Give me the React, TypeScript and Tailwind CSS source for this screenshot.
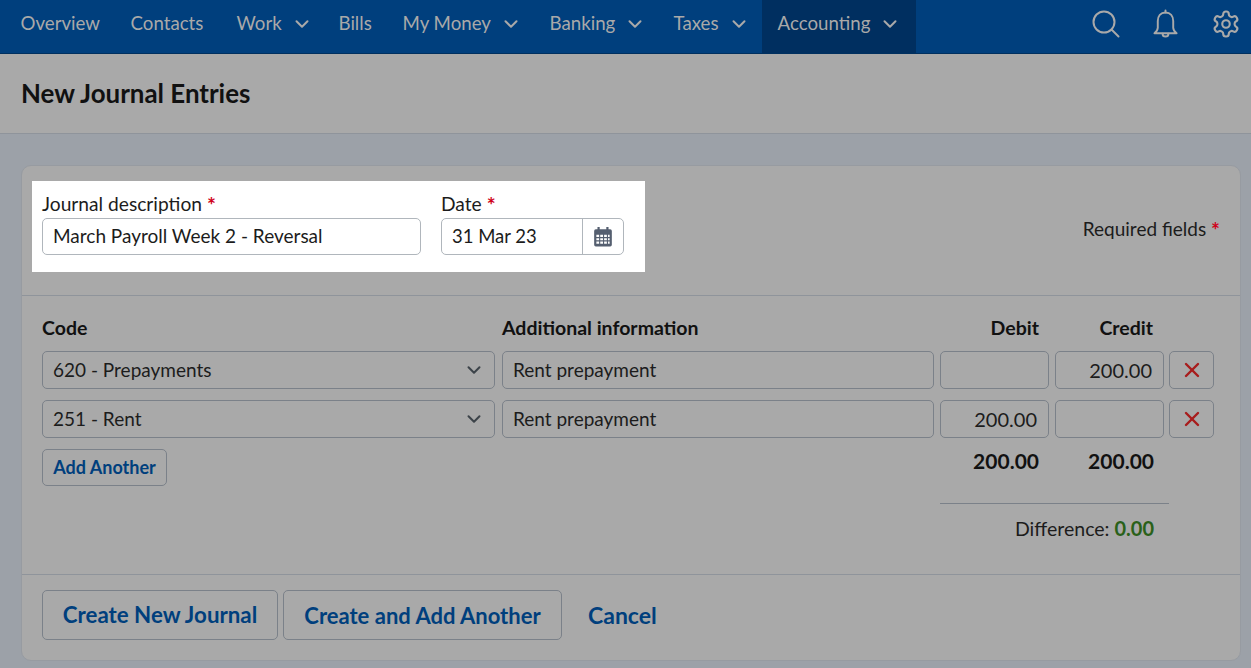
import { ChevronDown, X } from "lucide-react";

const FONT = "font-['Lato','Liberation_Sans',sans-serif]";

const navItems = [
  { label: "Overview", w: "w-[110px]" },
  { label: "Contacts", w: "w-[106px]" },
  { label: "Work", menu: true, w: "w-[102px]" },
  { label: "Bills", w: "w-[64px]" },
  { label: "My Money", menu: true, w: "w-[147px]" },
  { label: "Banking", menu: true, w: "w-[124px]" },
  { label: "Taxes", menu: true, w: "w-[104px]" },
];

function NavItem({ label, menu, w, active }: { label: string; menu?: boolean; w: string; active?: boolean }) {
  return (
    <div className={`flex h-full items-center gap-[9px] pb-[6px] pl-[15.500px] pr-[10px] text-[18.700px] text-[#a9a9a9] ${w} ${active ? "bg-[#002f60]" : ""}`}>
      <span className="whitespace-nowrap">{label}</span>
      {menu && <ChevronDown className="h-[22px] w-[22px] shrink-0" strokeWidth={2.2} />}
    </div>
  );
}

function Field({ children, className = "" }: { children?: React.ReactNode; className?: string }) {
  return (
    <div className={`flex h-[38px] items-center rounded-[5px] border border-[#7b8189] px-[10px] text-[19px] text-[#1c1c1c] ${className}`}>
      {children}
    </div>
  );
}

function Row({ code, debit, credit }: { code: string; debit?: string; credit?: string }) {
  return (
    <>
      <Field className="mr-[1px] justify-between pr-[9px] text-[19.200px]">
        <span>{code}</span>
        <ChevronDown className="h-[22px] w-[22px] text-[#3c4349]" strokeWidth={2.2} />
      </Field>
      <Field>Rent prepayment</Field>
      <Field className="justify-end pr-[11px] text-[20px]">{debit}</Field>
      <Field className="justify-end pr-[11px] text-[20px]">{credit}</Field>
      <div className="-ml-[1px] flex h-[38px] w-[45px] items-center justify-center rounded-[5px] border border-[#7b8189]">
        <X className="h-[24px] w-[24px] text-[#a81c1c]" strokeWidth={2.4} />
      </div>
    </>
  );
}

function Star() {
  return <span className="relative top-[2px] text-[21px] font-bold leading-none text-[#d0021b]">*</span>;
}

export default function App() {
  return (
    <div className={`h-[668px] overflow-hidden bg-[#9ca1a8] ${FONT}`}>
      <nav className="flex h-[54px] items-center border-b border-[#00305f] bg-[#003f7d] pl-[5px] pr-[10px]">
        {navItems.map((n) => (
          <NavItem key={n.label} {...n} />
        ))}
        <NavItem label="Accounting" menu active w="w-[154px]" />
        <div className="mb-[5px] ml-auto flex items-center gap-[32px] text-[#a9a9a9]">
          <svg width="28" height="28" viewBox="0 0 28 28" fill="none" stroke="currentColor" strokeWidth="2">
            <circle cx="12" cy="12" r="10.500" />
            <path d="M19.500 19.500l7 7" strokeLinecap="round" />
          </svg>
          <svg width="27" height="30" viewBox="0 0 28 30" fill="none" stroke="currentColor" strokeWidth="2" strokeLinejoin="round">
            <path d="M14 3c-5 0-8 3.600-8 9v7c0 2-1.500 4-3.500 5.500h23C23.500 23 22 21 22 19v-7c0-5.400-3-9-8-9z" />
            <path d="M14 1v2M11 25c0 2 1.300 3 3 3s3-1 3-3" strokeLinecap="round" />
          </svg>
          <svg width="30" height="30" viewBox="0 0 24 24" fill="none" stroke="currentColor" strokeWidth="1.700" strokeLinecap="round" strokeLinejoin="round">
            <path d="M12.220 2h-.440a2 2 0 0 0-2 2v.180a2 2 0 0 1-1 1.730l-.430.250a2 2 0 0 1-2 0l-.150-.080a2 2 0 0 0-2.730.730l-.220.380a2 2 0 0 0 .730 2.730l.150.100a2 2 0 0 1 1 1.720v.510a2 2 0 0 1-1 1.740l-.150.090a2 2 0 0 0-.730 2.730l.220.380a2 2 0 0 0 2.730.730l.150-.080a2 2 0 0 1 2 0l.430.250a2 2 0 0 1 1 1.730V20a2 2 0 0 0 2 2h.440a2 2 0 0 0 2-2v-.180a2 2 0 0 1 1-1.730l.430-.250a2 2 0 0 1 2 0l.150.080a2 2 0 0 0 2.730-.730l.220-.390a2 2 0 0 0-.730-2.730l-.150-.080a2 2 0 0 1-1-1.740v-.500a2 2 0 0 1 1-1.740l.150-.090a2 2 0 0 0 .730-2.730l-.220-.380a2 2 0 0 0-2.730-.730l-.150.080a2 2 0 0 1-2 0l-.430-.250a2 2 0 0 1-1-1.730V4a2 2 0 0 0-2-2z" />
            <circle cx="12" cy="12" r="3" />
          </svg>
        </div>
      </nav>

      <header className="flex h-[80px] items-center border-b border-[#8f949b] bg-[#a9a9a9] pl-[21px]">
        <h1 className="text-[25.900px] font-bold text-[#111]">New Journal Entries</h1>
      </header>

      <div className="pl-[21px] pr-[10px] pt-[31px]">
        <div className="h-[496px] rounded-[10px] border border-[#979ba1] bg-[#a9a9a9]">
          <div className="flex h-[130px] items-start justify-between border-b border-[#8f949b] pl-[10px] pr-[20px] pt-[15px]">
            <div className="flex h-[91px] w-[613px] gap-[20px] bg-white pl-[10px] pt-[11px]">
              <div className="w-[379px]">
                <div className="mb-[2px] h-[24px] text-[19.200px] leading-[24px] text-[#1c1c1c]">
                  Journal description <Star />
                </div>
                <div className="flex h-[37px] items-center rounded-[5px] border border-[#b0b6bc] px-[10px] text-[19px] text-[#1c1c1c]">
                  March Payroll Week 2 - Reversal
                </div>
              </div>
              <div className="w-[183px]">
                <div className="mb-[2px] h-[24px] text-[19.200px] leading-[24px] text-[#1c1c1c]">
                  Date <Star />
                </div>
                <div className="flex h-[37px] items-center rounded-[5px] border border-[#b0b6bc] text-[18.500px] text-[#1c1c1c]">
                  <span className="flex-1 pl-[10px]">31 Mar 23</span>
                  <span className="flex h-full w-[41px] items-center justify-center border-l border-[#b0b6bc]">
                    <svg width="18" height="21" viewBox="0 0 16 19" fill="#555f70">
                      <path d="M3 1h2v3H3zM11 1h2v3h-2z" />
                      <path fillRule="evenodd" d="M1.500 3h13A1.500 1.500 0 0 1 16 4.500V17a1.500 1.500 0 0 1-1.500 1.500h-13A1.500 1.500 0 0 1 0 17V4.500A1.500 1.500 0 0 1 1.500 3zM2 8v2h2.500V8zm3.500 0v2h2.500V8zM9 8v2h2.500V8zm3.500 0v2H14V8zM2 11v2h2.500v-2zm3.500 0v2h2.500v-2zM9 11v2h2.500v-2zm3.500 0v2H14v-2zM2 14v2h2.500v-2zm3.500 0v2h2.500v-2zM9 14v2h2.500v-2zm3.500 0v2H14v-2z" />
                    </svg>
                  </span>
                </div>
              </div>
            </div>
            <div className="mt-[36px] text-[19px] leading-[24px] text-[#1c1c1c]">
              Required fields <Star />
            </div>
          </div>

          <div className="h-[279px] border-b border-[#8f949b] pl-[20px] pt-[20px]">
            <div className="grid grid-cols-[454px_432px_109px_109px_45px] gap-y-[11px] [column-gap:6px]">
              <div className="h-[24px] text-[19.500px] font-bold leading-[24px] text-[#111]">Code</div>
              <div className="h-[24px] text-[19.500px] font-bold leading-[24px] text-[#111]">Additional information</div>
              <div className="h-[24px] pr-[10px] text-right text-[19.500px] font-bold leading-[24px] text-[#111]">Debit</div>
              <div className="h-[24px] pr-[11px] text-right text-[19.500px] font-bold leading-[24px] text-[#111]">Credit</div>
              <div />
              <Row code="620 - Prepayments" credit="200.00" />
              <Row code="251 - Rent" debit="200.00" />
              <div>
                <div className="flex h-[37px] w-[125px] items-center justify-center rounded-[5px] border border-[#7b8189] text-[18px] font-bold text-[#003f7d]">
                  Add Another
                </div>
              </div>
              <div />
              <div className="h-[24px] pr-[10px] text-right text-[21px] font-bold leading-[24px] text-[#111]">200.00</div>
              <div className="h-[24px] pr-[10px] text-right text-[21px] font-bold leading-[24px] text-[#111]">200.00</div>
              <div />
            </div>
            <div className="ml-[898px] mt-[17px] w-[229px] border-t border-[#7b8189] pr-[15px] pt-[12px] text-right text-[19.500px] leading-[24px] text-[#1c1c1c]">
              Difference: <span className="text-[20px] font-bold text-[#2a6119]">0.00</span>
            </div>
          </div>

          <div className="flex items-center gap-[5px] pl-[20px] pt-[15px]">
            <div className="flex h-[50px] w-[236px] items-center justify-center rounded-[5px] border border-[#7b8189] text-[22.300px] font-bold text-[#003f7d]">
              Create New Journal
            </div>
            <div className="flex h-[50px] w-[279px] items-center justify-center rounded-[5px] border border-[#7b8189] text-[22px] font-bold text-[#003f7d]">
              Create and Add Another
            </div>
            <div className="pl-[21px] text-[23px] font-bold text-[#003f7d]">Cancel</div>
          </div>
        </div>
      </div>
    </div>
  );
}
